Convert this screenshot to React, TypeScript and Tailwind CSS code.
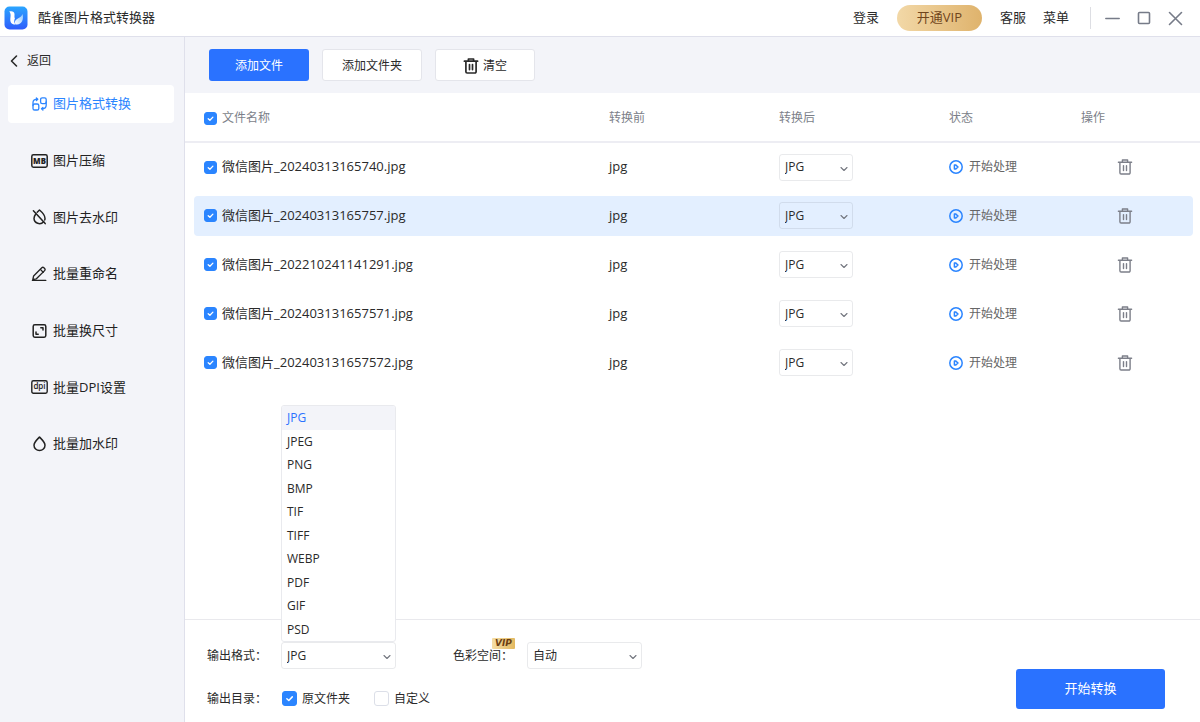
import { useState } from 'react';
import type { ReactNode } from 'react';

const navItems = [
  { id: 'convert', icon: ConvertIcon, label: '图片格式转换' },
  { id: 'compress', icon: MbIcon, label: '图片压缩' },
  { id: 'unmark', icon: DropOffIcon, label: '图片去水印' },
  { id: 'rename', icon: PenIcon, label: '批量重命名' },
  { id: 'resize', icon: ResizeIcon, label: '批量换尺寸' },
  { id: 'dpi', icon: DpiIcon, label: '批量DPI设置' },
  { id: 'mark', icon: DropIcon, label: '批量加水印' },
];

const files = [
  '微信图片_20240313165740.jpg',
  '微信图片_20240313165757.jpg',
  '微信图片_202210241141291.jpg',
  '微信图片_202403131657571.jpg',
  '微信图片_202403131657572.jpg',
];

const formats = ['JPG', 'JPEG', 'PNG', 'BMP', 'TIF', 'TIFF', 'WEBP', 'PDF', 'GIF', 'PSD'];

const iconProps = {
  fill: 'none',
  stroke: 'currentColor',
  strokeLinecap: 'round',
  strokeLinejoin: 'round',
} as const;

function ConvertIcon() {
  return (
    <svg width="17" height="16" viewBox="0 0 17 16" strokeWidth="1.3" {...iconProps}>
      <rect x="2" y="8" width="5.8" height="6" rx="1.6" />
      <path d="M2 9.6V6.4C2 4.2 3.4 3.200 6.600 3.200M5.400 1.900l1.400 1.300-1.400 1.300" />
      <rect x="9.6" y="1.8" width="5.6" height="5.8" rx="1.6" />
      <path d="M15.200 5.800v3.400c0 2.400-1.400 3.600-4.600 3.600M11.900 11.500l-1.400 1.300 1.400 1.300" />
    </svg>
  );
}

function MbIcon() {
  return (
    <svg width="17" height="16" viewBox="0 0 17 16" strokeWidth="1.5" {...iconProps}>
      <rect x="0.8" y="1.8" width="15.4" height="12.4" rx="1.6" />
      <text x="8.5" y="10.900" textAnchor="middle" fontSize="7.800" fontWeight="800" fill="currentColor" stroke="none">MB</text>
    </svg>
  );
}

function DropOffIcon() {
  return (
    <svg width="17" height="16" viewBox="0 0 17 16" strokeWidth="1.5" {...iconProps}>
      <path d="M4.6 5.2C3.6 6.6 3 8 3 9.4a5.5 5.5 0 0 0 9.6 3.4M6.2 3.2 8.5 1c2.6 2.2 5.5 5.2 5.5 8.4 0 .6-.1 1.1-.3 1.6" />
      <path d="M2.4 1.8 14.2 14.6" />
    </svg>
  );
}

function PenIcon() {
  return (
    <svg width="17" height="16" viewBox="0 0 17 16" strokeWidth="1.3" {...iconProps}>
      <path d="M1.8 13.6l.8-3.6 8.2-8.2a1.5 1.5 0 0 1 2.1 0l.7.7a1.5 1.5 0 0 1 0 2.1L5.4 12.8z" />
      <path d="M9.6 3.6l2.6 2.6M1.4 14.4h13.4" />
    </svg>
  );
}

function ResizeIcon() {
  return (
    <svg width="17" height="16" viewBox="0 0 17 16" strokeWidth="1.5" {...iconProps}>
      <rect x="2.2" y="1.8" width="12.6" height="12.4" rx="1.6" />
      <path d="M9.8 4.8h2.2v2.2M7.200 11.200H5V9" />
    </svg>
  );
}

function DpiIcon() {
  return (
    <svg width="17" height="16" viewBox="0 0 17 16" strokeWidth="1.4" {...iconProps}>
      <rect x="0.8" y="1.8" width="15.4" height="12.4" rx="1.6" />
      <text x="8.5" y="10.4" textAnchor="middle" fontSize="8" fontWeight="600" fill="currentColor" stroke="none">dpi</text>
    </svg>
  );
}

function DropIcon() {
  return (
    <svg width="17" height="16" viewBox="0 0 17 16" strokeWidth="1.5" {...iconProps}>
      <path d="M8.5 1C6 3.6 3 6.3 3 9.3a5.5 5.3 0 0 0 11 0C14 6.3 11 3.6 8.5 1z" />
    </svg>
  );
}

function TrashIcon({ bold = false }: { bold?: boolean }) {
  return (
    <svg width="16" height="16" viewBox="0 0 16 16" strokeWidth={bold ? 1.7 : 1.4} {...iconProps}>
      <path d="M1.4 3.2h13.2M5.4 3V1h5.200v2M2.900 3.400v10.400a1.200 1.200 0 0 0 1.200 1.200h7.800a1.200 1.200 0 0 0 1.200-1.200V3.400M6.500 6.600v5M9.500 6.600v5" />
    </svg>
  );
}

function PlayIcon() {
  return (
    <svg width="14" height="14" viewBox="0 0 14 14" strokeWidth="1.5" {...iconProps}>
      <circle cx="7" cy="7" r="6.2" />
      <path d="M5.4 4.9v4.2h1.2L9 7 6.6 4.9z" />
    </svg>
  );
}

function Logo() {
  return (
    <svg width="24" height="24" viewBox="0 0 24 24">
      <defs>
        <linearGradient id="logo-bg" x1="0" y1="0" x2="0" y2="1">
          <stop offset="0" stopColor="#2aa5ff" />
          <stop offset="1" stopColor="#2d5cfb" />
        </linearGradient>
        <linearGradient id="logo-wing" x1="1" y1="0" x2="0" y2="1">
          <stop offset="0" stopColor="#8cc6ff" />
          <stop offset="1" stopColor="#ffffff" />
        </linearGradient>
      </defs>
      <rect x="0.5" y="0.5" width="23" height="23" rx="5" fill="url(#logo-bg)" />
      <path d="M5.200 5.600C7.400 4.800 10.400 5.200 10.500 8c.1 2-.3 3.200.4 4.400-1 2-1 4.400.8 6.200-3.600.2-5.600-2.200-5.400-5.200.2-2.600 1-5.600-1.100-7.800z" fill="#fff" />
      <path d="M18.600 8c1.400 5.200-.8 10.400-5.600 10.600-1.400 0-2.200-1-2.100-2.400.3-3.600 5.200-3.200 7.700-8.200z" fill="url(#logo-wing)" />
    </svg>
  );
}

interface CheckProps {
  checked: boolean;
  onChange: () => void;
  large?: boolean;
}

function Check({ checked, onChange, large = false }: CheckProps) {
  return (
    <span className={`relative grid shrink-0 ${large ? 'size-[15px]' : 'size-[13px]'}`}>
      <input
        type="checkbox"
        checked={checked}
        onChange={onChange}
        className="size-full appearance-none rounded-[3px] border border-[#dcdfe8] bg-white checked:border-[#2b85ff] checked:bg-[#2b85ff]"
      />
      {checked && (
        <svg className="pointer-events-none absolute inset-0 size-full text-white" viewBox="0 0 13 13" strokeWidth="1.3" {...iconProps}>
          <path d="M4.2 6.7l1.7 1.6 3-3.2" />
        </svg>
      )}
    </span>
  );
}

interface SelectBoxProps {
  id?: string;
  label?: string;
  defaultValue: string;
  options: string[];
}

function SelectBox({ id, label, defaultValue, options }: SelectBoxProps) {
  return (
    <div className="relative w-full">
      <select
        id={id}
        aria-label={label}
        defaultValue={defaultValue}
        className="block h-[27px] w-full appearance-none rounded-[3px] border border-gray-500/15 bg-transparent px-[5px] text-xs text-[#2a2a2a]"
      >
        {options.map((o) => (
          <option key={o}>{o}</option>
        ))}
      </select>
      <svg className="pointer-events-none absolute top-[11px] right-[5px] text-[#73767f]" width="8" height="8" viewBox="0 0 8 8" strokeWidth="1.1" {...iconProps}>
        <path d="M1 2.5l3 3 3-3" />
      </svg>
    </div>
  );
}

function TitleBar() {
  return (
    <header className="flex h-[37px] items-center border-b border-[#dfe0eb] bg-white pr-[17px] pl-1">
      <Logo />
      <h1 className="ml-[10px] flex-1 text-[13px]">酷雀图片格式转换器</h1>
      <div className="flex items-center text-[13px]">
        <button>登录</button>
        <button className="mx-[18px] h-[26px] w-[85px] rounded-full bg-linear-to-r from-[#f2d8a7] to-[#dfb36c] text-[13px] text-[#70451c]">开通VIP</button>
        <button>客服</button>
        <button className="ml-[17px]">菜单</button>
      </div>
      <div className="ml-[21px] flex items-center gap-[17px] border-l border-[#dddee3] pl-[14px] text-[#767b88]">
        <button aria-label="最小化" className="h-[22px]">
          <svg width="15" height="15" viewBox="0 0 15 15" strokeWidth="1.5" {...iconProps}>
            <path d="M0.8 7.5h13.4" />
          </svg>
        </button>
        <button aria-label="最大化">
          <svg width="14" height="14" viewBox="0 0 14 14" strokeWidth="1.6" {...iconProps}>
            <rect x="1.5" y="1.5" width="11" height="11" rx="1" />
          </svg>
        </button>
        <button aria-label="关闭">
          <svg width="15" height="15" viewBox="0 0 15 15" strokeWidth="1.6" {...iconProps}>
            <path d="M1.5 1.500l12 12M13.500 1.500l-12 12" />
          </svg>
        </button>
      </div>
    </header>
  );
}

function Sidebar() {
  const [active, setActive] = useState('convert');

  return (
    <aside className="w-[185px] shrink-0 border-r border-[#dfe0eb] bg-[#f3f4f9] px-2">
      <button className="flex h-12 items-center gap-2 text-xs">
        <svg width="11" height="14" viewBox="0 0 11 14" strokeWidth="1.6" {...iconProps}>
          <path d="M8.5 2l-5 5 5 5" />
        </svg>
        返回
      </button>
      <nav className="flex h-[378px] w-[166px] flex-col justify-between">
        {navItems.map((item) => (
          <button
            key={item.id}
            onClick={() => setActive(item.id)}
            className={`flex h-[38px] items-center gap-[5px] rounded pl-[23px] text-[13px] ${
              active === item.id ? 'bg-white text-[#2b85ff]' : 'text-[#222]'
            }`}
          >
            <item.icon />
            {item.label}
          </button>
        ))}
      </nav>
    </aside>
  );
}

function Toolbar() {
  return (
    <div className="flex gap-[13px] bg-[#f3f4f9] px-6 py-3 text-xs">
      <button className="h-8 w-[100px] rounded-[3px] bg-[#2a72ff] pt-px text-white">添加文件</button>
      <button className="h-8 w-[100px] rounded-[3px] border border-[#e4e5eb] bg-white pt-px">添加文件夹</button>
      <button className="flex h-8 w-[100px] items-center justify-center gap-1 rounded-[3px] border border-[#e4e5eb] bg-white pt-px">
        <TrashIcon bold />
        清空
      </button>
    </div>
  );
}

function Cell({ className = '', on, children }: { className?: string; on: boolean; children: ReactNode }) {
  return (
    <td className="h-[49px] p-0">
      <div className={`flex h-10 items-center ${on ? 'bg-[#e3efff]' : ''} ${className}`}>{children}</div>
    </td>
  );
}

function FileTable() {
  const [checked, setChecked] = useState(files.map(() => true));
  const [current, setCurrent] = useState(1);
  const all = checked.every(Boolean);

  return (
    <table className="w-full table-fixed border-collapse">
      <thead className="text-left text-xs text-[#7c7f89]">
        <tr className="h-[49px] border-b-2 border-[#ededf3]">
          <th className="p-0 pt-[2px] pl-[19px] font-normal">
            <label className="flex items-center gap-[5px]">
              <Check checked={all} onChange={() => setChecked(files.map(() => !all))} />
              文件名称
            </label>
          </th>
          <th className="w-[170px] p-0 pt-[2px] font-normal">转换前</th>
          <th className="w-[170px] p-0 pt-[2px] font-normal">转换后</th>
          <th className="w-[132px] p-0 pt-[2px] font-normal">状态</th>
          <th className="w-[119px] p-0 pt-[2px] font-normal">操作</th>
        </tr>
      </thead>
      <tbody>
        {files.map((name, i) => {
          const on = current === i;
          return (
            <tr key={name} onClick={() => setCurrent(i)}>
              <Cell on={on} className="ml-[9px] rounded-l pl-[10px]">
                <label className="flex items-center gap-[5px] text-[13px]">
                  <Check
                    checked={checked[i]}
                    onChange={() => setChecked(checked.map((c, n) => (n === i ? !c : c)))}
                  />
                  {name}
                </label>
              </Cell>
              <Cell on={on} className="text-[13px]">jpg</Cell>
              <Cell on={on}>
                <div className="w-[74px]">
                  <SelectBox label="转换后格式" defaultValue="JPG" options={formats} />
                </div>
              </Cell>
              <Cell on={on}>
                <button className="flex items-center gap-[6px] text-xs text-[#666]">
                  <span className="text-[#2b85ff]">
                    <PlayIcon />
                  </span>
                  开始处理
                </button>
              </Cell>
              <Cell on={on} className="mr-[7px] rounded-r pl-9 text-[#7c7f89]">
                <button aria-label="删除">
                  <TrashIcon />
                </button>
              </Cell>
            </tr>
          );
        })}
      </tbody>
    </table>
  );
}

function FormatMenu() {
  return (
    <ul className="absolute bottom-full left-0 flex h-[237px] w-full flex-col overflow-hidden rounded-[3px] border border-[#e9eaee] bg-white text-xs">
      {formats.map((f, i) => (
        <li key={f} className="flex flex-1">
          <button className={`w-full px-[5px] pt-px text-left ${i === 0 ? 'bg-[#f3f4f9] text-[#2a72ff]' : 'text-[#2a2a2a]'}`}>{f}</button>
        </li>
      ))}
    </ul>
  );
}

function OutputBar() {
  const [dir, setDir] = useState('source');

  return (
    <footer className="flex items-center justify-between border-t border-[#e9e9ed] pt-[22px] pr-[35px] pb-[10px] pl-[22px] text-xs">
      <div className="flex flex-col gap-4">
        <div className="flex items-center">
          <label htmlFor="format" className="w-[74px]">输出格式：</label>
          <div className="relative w-[115px]">
            <SelectBox id="format" defaultValue="JPG" options={formats} />
            <FormatMenu />
          </div>
          <label htmlFor="color" className="relative ml-[57px] w-[74px]">
            色彩空间：
            <span className="absolute -top-[10px] left-[39px] h-[11px] w-[23px] rounded-[1px] bg-linear-to-r from-[#f5dda5] to-[#e3b95f] text-center font-['DejaVu_Sans'] text-[9px] leading-[11px] font-bold text-[#6b3f13] italic">
              VIP
            </span>
          </label>
          <div className="w-[115px]">
            <SelectBox id="color" defaultValue="自动" options={['自动', 'RGB', 'CMYK']} />
          </div>
        </div>
        <div className="flex h-[27px] items-center">
          <span className="w-[75px]">输出目录：</span>
          <label className="flex items-center gap-[5px]">
            <Check large checked={dir === 'source'} onChange={() => setDir('source')} />
            原文件夹
          </label>
          <label className="ml-6 flex items-center gap-[5px]">
            <Check large checked={dir === 'custom'} onChange={() => setDir('custom')} />
            自定义
          </label>
        </div>
      </div>
      <button className="mt-6 h-10 w-[149px] rounded-[3px] bg-[#2a72ff] text-[13px] text-white">开始转换</button>
    </footer>
  );
}

export default function App() {
  return (
    <div className="flex min-h-screen flex-col bg-white font-['Open_Sans','Noto_Sans_CJK_SC',sans-serif] text-[#2a2a2a]">
      <TitleBar />
      <div className="flex flex-1">
        <Sidebar />
        <main className="flex min-w-0 flex-1 flex-col">
          <Toolbar />
          <div className="flex-1">
            <FileTable />
          </div>
          <OutputBar />
        </main>
      </div>
    </div>
  );
}
